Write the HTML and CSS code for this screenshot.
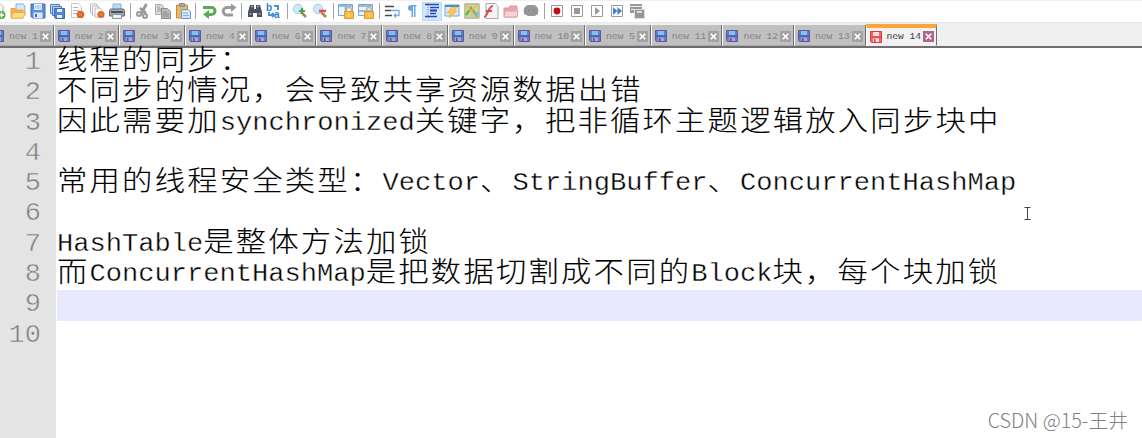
FILE: index.html
```html
<!DOCTYPE html>
<html lang="zh-CN">

<head>
  <meta charset="utf-8">
  <title>new 14</title>
  <link rel="stylesheet" href="styles.css">
</head>

<body>
  <svg class="defs">
    <symbol id="disk" viewBox="0 0 16 16">
      <path d="M1 1h14v14H2.500L1 13.500z" fill="#5b8fd6" stroke="#4166b4" />
      <path d="M4 1h8v6H4z" fill="#e4f1ff" />
      <path d="M4.500 3h7M4.500 5h7" stroke="#8dc0ee" />
      <path d="M3.500 9.500h9V15h-9z" fill="#dceaf8" />
      <path d="M5 11h2v3H5z" fill="#4166b4" />
    </symbol>
    <symbol id="tabdisk" viewBox="0 0 12 12">
      <path d="M.5.5h11v11h-10l-1-1z" fill="#5a83c9" stroke="#67549a" />
      <path d="M3 1h6v4H3z" fill="#7fc0f0" />
      <path d="M1 6h10" stroke="#504b91" />
      <path d="M3 7.500h6V11H3z" fill="#a5a8d6" />
      <path d="M4 8h1.500v3H4z" fill="#604f96" />
    </symbol>
    <symbol id="close" viewBox="0 0 10 10">
      <path d="M0 0h10v10H0z" fill="currentColor" />
      <path d="M2.500 2.500l5 5M7.500 2.500l-5 5" stroke="#fff" stroke-width="1.600" />
    </symbol>
    <symbol id="lock" viewBox="0 0 16 16">
      <path d="M8.500 9V7a2.500 2.500 0 0 1 5 0v2" fill="none" stroke="#c5b58e" stroke-width="1.400" />
      <path d="M6.500 8.500h9v7h-9z" fill="#f7bd4c" stroke="#e39b2c" />
      <path d="M10.500 10.500h1v3h-1z" fill="#fff0bd" />
    </symbol>
  </svg>

  <div class="toolbar">
    <svg class="icon" viewBox="0 0 16 16"><path d="M3 .5h7l3 3v12H3z" fill="#fff" stroke="#aaa" /><circle cx="11.500" cy="12" r="4" fill="#58ad48" /><path d="M9 12h5M11.500 9.500v5" stroke="#fff" stroke-width="1.500" /></svg>
    <svg class="icon" viewBox="0 0 16 16"><path d="M6 1h7l2 2v9H6z" fill="#d5e9fa" stroke="#8aaed6" /><path d="M1 5.500h4l1 1.500h7v8H1z" fill="#f1b64e" stroke="#e9a63f" /><path d="M3 9.500h12.500L13 15H1z" fill="#fbdc8a" stroke="#edb14b" /></svg>
    <svg class="icon"><use href="#disk" /></svg>
    <svg class="icon" viewBox="0 0 16 16"><path d="M1.500 1.500h9v9h-9z" fill="#bddcf7" stroke="#4e7ac5" /><path d="M3.500 3.500h9v9h-9z" fill="#a9d0f4" stroke="#4e7ac5" /><path d="M5.500 5.500h10v10h-9l-1-1z" fill="#5587d0" stroke="#4166b4" /><path d="M8 6h5v3H8zM8 12h5v3H8z" fill="#e2f1ff" /></svg>
    <svg class="icon" viewBox="0 0 16 16"><path d="M2.500.5h7l3 3v11h-10z" fill="#fff" stroke="#c8c8c8" /><path d="M4 4.500h5M4 7.500h6M4 10.500h4" stroke="#b5b5b5" /><circle cx="11.500" cy="11.500" r="3.800" fill="#e4632a" /><path d="M10 10l3 3M13 10l-3 3" stroke="#f28a55" /></svg>
    <svg class="icon" viewBox="0 0 16 16"><path d="M1.500 1h6v9h-6z" fill="#fff" stroke="#bbb" /><path d="M3.500 3h6v9h-6z" fill="#fff" stroke="#bbb" /><path d="M6 5h5l2 2v7H6z" fill="#fff" stroke="#bbb" /><circle cx="12" cy="11.500" r="3.600" fill="#e4632a" /><path d="M10.500 10l3 3M13.500 10l-3 3" stroke="#f28a55" /></svg>
    <svg class="icon" viewBox="0 0 16 16"><path d="M4 1h8v6H4z" fill="#b7dcfa" stroke="#8eb0d0" /><path d="M1.500 6h13l1 2v5H.5V8z" fill="#a8adb3" stroke="#62676e" /><path d="M2 9h12" stroke="#4b4e54" stroke-width="2" /><path d="M3.500 11.500h9v4h-9z" fill="#edf4fa" stroke="#8a9099" /></svg>
    <span class="sep"></span>
    <svg class="icon" viewBox="0 0 16 16"><path d="M11.500 1L6 11M5 5l6 5" stroke="#999" stroke-width="2.800" fill="none" /><circle cx="4" cy="11" r="2" fill="none" stroke="#999" stroke-width="2" /><circle cx="10" cy="13" r="2" fill="none" stroke="#999" stroke-width="2" /></svg>
    <svg class="icon" viewBox="0 0 16 16"><path d="M.5 1.500h6l2 2v8h-8z" fill="#ddd" stroke="#aaa" /><path d="M2 4h3M2 6h5M2 8h4" stroke="#999" /><path d="M6.500 5.500h6l3 3v7h-9z" fill="#bbb" stroke="#8b8b8b" /><path d="M8 9h4M8 11h6M8 13h6" stroke="#888" /></svg>
    <svg class="icon" viewBox="0 0 16 16"><path d="M1.500 2h11v13h-11z" fill="#edb85e" stroke="#c28a40" /><path d="M4.500.5h5v3h-5z" fill="#aaa" stroke="#888" /><path d="M6.500 6.500h7l2 2v7h-9z" fill="#d1e6fb" stroke="#6899d6" /><path d="M8 10h5M8 12.500h6" stroke="#88b3e7" /></svg>
    <span class="sep"></span>
    <svg class="icon" viewBox="0 0 16 16"><path d="M2 4.500h8.500a3.500 3.500 0 0 1 0 7H7" fill="none" stroke="#58ac50" stroke-width="3" /><path d="M8 7v9l-6-4.500z" fill="#58ac50" /></svg>
    <svg class="icon" viewBox="0 0 16 16"><path d="M12 4.500H6a3.500 3.500 0 0 0 0 7.500h6" fill="none" stroke="#999" stroke-width="3" /><path d="M10 .5v8.500l5.500-4.500z" fill="#999" /></svg>
    <span class="sep"></span>
    <svg class="icon" viewBox="0 0 16 16"><path d="M3 2h4v4h2V2h4l2 7v5h-5v-4H6v4H1V9z" fill="#4d535e" /><path d="M4 3.500h2M10 3.500h2M2.500 11h2M11.500 11h2" stroke="#a3adbd" stroke-width="1.500" /></svg>
    <svg class="icon" viewBox="0 0 16 16"><text x="0" y="8" class="glyph">b</text><text x="8" y="15" class="glyph">a</text><path d="M3 9v3h4M6 10l2 2-2 2M8 3h4v4" stroke="#4991d9" stroke-width="2" fill="none" /></svg>
    <span class="sep"></span>
    <svg class="icon" viewBox="0 0 16 16"><path d="M9 9l5 5" stroke="#b78051" stroke-width="2.500" /><circle cx="6" cy="6" r="4.700" fill="#cce8fc" stroke="#abcbe2" /><path d="M7 8h6M10 5v6" stroke="#51a447" stroke-width="2.200" /></svg>
    <svg class="icon" viewBox="0 0 16 16"><path d="M9 9l5 5" stroke="#b78051" stroke-width="2.500" /><circle cx="6" cy="6" r="4.700" fill="#cce8fc" stroke="#abcbe2" /><path d="M7 8h7" stroke="#e94a45" stroke-width="2.600" /></svg>
    <span class="sep"></span>
    <svg class="icon" viewBox="0 0 16 16"><path d="M.5 1.500h14v11H.5z" fill="#edf6fd" stroke="#78a8d8" /><path d="M1 3h13M7.500 3v9" stroke="#78a8d8" stroke-width="1.500" /><use href="#lock" /></svg>
    <svg class="icon" viewBox="0 0 16 16"><path d="M.5 1.500h14v11H.5z" fill="#edf6fd" stroke="#78a8d8" /><path d="M1 3h13M1 8h13" stroke="#78a8d8" stroke-width="1.500" /><use href="#lock" /></svg>
    <span class="sep"></span>
    <svg class="icon" viewBox="0 0 16 16"><path d="M1 3.500h9M1 7.500h6M1 12.500h7" stroke="#45484d" stroke-width="1.500" /><path d="M7 7.500h8v5h-5M12 10.500l-2 2 2 2" fill="none" stroke="#79ace2" stroke-width="1.300" /></svg>
    <svg class="icon" viewBox="0 0 16 16"><path d="M7.500 2h5v1.500h-1V14H10V3.500H9V14H7.500V8C2.500 8 2.500 2 7.500 2z" fill="#6aa8e6" /></svg>
    <span class="pressed"><svg class="icon" viewBox="0 0 16 16"><path d="M1 1.500h14M6 4.500h9M6 10.500h6M1 13.500h12" stroke="#2947bd" stroke-width="1.500" /><path d="M6 7.500h7" stroke="#2947bd" stroke-width="2.200" /><path d="M4 0v16" stroke="#d45c70" stroke-dasharray="1 1" /></svg></span>
    <svg class="icon" viewBox="0 0 16 16"><path d="M1 2h14v11H1z" fill="#d9eaf9" stroke="#74a5d4" /><path d="M1 3h14" stroke="#5189c8" stroke-width="2" /><path d="M8 4h5l-3 4h3l-8 7 2-5H3z" fill="#ffc84e" stroke="#e3a33a" stroke-width=".6" /></svg>
    <svg class="icon" viewBox="0 0 16 16"><path d="M.8.8h14.400v14.400H.8z" fill="#cbd69b" stroke="#a8a891" /><path d="M2 12l5-7 6 8" fill="none" stroke="#6fac6a" stroke-width="2.500" /><path d="M3 2l4 6 6-6M8 8v6" fill="none" stroke="#f0b950" stroke-width="1.500" /><path d="M10 9h4v5h-3z" fill="#79b7cb" /></svg>
    <svg class="icon" viewBox="0 0 16 16"><path d="M3 .5h9l3 3v12H3z" fill="#f5f5f5" stroke="#aaa" /><path d="M1 14c4 0 4-11 9-11M3 8h6" fill="none" stroke="#d94955" stroke-width="2" /></svg>
    <svg class="icon" viewBox="0 0 16 16"><path d="M1 5h5l1-2h7v11H1z" fill="#e8a7aa" stroke="#da9296" /><path d="M2 8h13l-1 6H1z" fill="#f7d5d6" stroke="#dda0a3" /></svg>
    <svg class="icon" viewBox="0 0 16 16"><path d="M1 5l3-3h8l3 3v6l-3 2H5l-4-2z" fill="#999" /><ellipse cx="8" cy="8" rx="7.500" ry="4.500" fill="#969696" /><path d="M5 7h1M10 7h1" stroke="#777" /></svg>
    <span class="sep"></span>
    <svg class="icon" viewBox="0 0 16 16"><path class="key" d="M2.500 2.500h11v11h-11z" /><circle cx="8" cy="8" r="3.400" fill="#c40d12" /></svg>
    <svg class="icon" viewBox="0 0 16 16"><path class="key" d="M2.500 2.500h11v11h-11z" /><path d="M5 5h6v6H5z" fill="#999" /></svg>
    <svg class="icon" viewBox="0 0 16 16"><path class="key" d="M2.500 2.500h11v11h-11z" /><path d="M6 4l5 4-5 4z" fill="#999" /></svg>
    <svg class="icon" viewBox="0 0 16 16"><path class="key" d="M2.500 2.500h11v11h-11z" /><path d="M4 4l4.500 4L4 12zM8.500 4L13 8l-4.500 4z" fill="#3c83d6" /></svg>
    <svg class="icon" viewBox="0 0 16 16"><path d="M1 1h12v9H1z" fill="#999" /><path d="M1 3.500h12M2 6.500h8" stroke="#eee" /><path d="M5.500 6.500h10v9h-10z" fill="#969696" stroke="#ddd" /><path d="M8 8h5v2H8z" fill="#ddd" /></svg>
  </div>

  <div class="tabs">
    <div class="tab"><svg class="disk"><use href="#tabdisk" /></svg><span>new 1</span><svg class="close"><use href="#close" /></svg></div>
    <div class="tab"><svg class="disk"><use href="#tabdisk" /></svg><span>new 2</span><svg class="close"><use href="#close" /></svg></div>
    <div class="tab"><svg class="disk"><use href="#tabdisk" /></svg><span>new 3</span><svg class="close"><use href="#close" /></svg></div>
    <div class="tab"><svg class="disk"><use href="#tabdisk" /></svg><span>new 4</span><svg class="close"><use href="#close" /></svg></div>
    <div class="tab"><svg class="disk"><use href="#tabdisk" /></svg><span>new 6</span><svg class="close"><use href="#close" /></svg></div>
    <div class="tab"><svg class="disk"><use href="#tabdisk" /></svg><span>new 7</span><svg class="close"><use href="#close" /></svg></div>
    <div class="tab"><svg class="disk"><use href="#tabdisk" /></svg><span>new 8</span><svg class="close"><use href="#close" /></svg></div>
    <div class="tab"><svg class="disk"><use href="#tabdisk" /></svg><span>new 9</span><svg class="close"><use href="#close" /></svg></div>
    <div class="tab wide"><svg class="disk"><use href="#tabdisk" /></svg><span>new 10</span><svg class="close"><use href="#close" /></svg></div>
    <div class="tab"><svg class="disk"><use href="#tabdisk" /></svg><span>new 5</span><svg class="close"><use href="#close" /></svg></div>
    <div class="tab wide"><svg class="disk"><use href="#tabdisk" /></svg><span>new 11</span><svg class="close"><use href="#close" /></svg></div>
    <div class="tab wide"><svg class="disk"><use href="#tabdisk" /></svg><span>new 12</span><svg class="close"><use href="#close" /></svg></div>
    <div class="tab wide"><svg class="disk"><use href="#tabdisk" /></svg><span>new 13</span><svg class="close"><use href="#close" /></svg></div>
    <div class="tab wide active">
      <svg class="disk" viewBox="0 0 12 12"><path d="M.5.5h11v11h-10l-1-1z" fill="#f0686a" stroke="#d93c3e" /><path d="M3 1h6v4H3z" fill="#ffdada" /><path d="M1 6h10" stroke="#d93c3e" /><path d="M3 7.500h6V11H3z" fill="#ffe5e5" /><path d="M4 8h1.500v3H4z" fill="#d93c3e" /></svg>
      <span>new 14</span><svg class="close"><use href="#close" /></svg>
    </div>
  </div>

  <div class="editor">
    <div class="gutter">
      <div>1</div>
      <div>2</div>
      <div>3</div>
      <div>4</div>
      <div>5</div>
      <div>6</div>
      <div>7</div>
      <div>8</div>
      <div>9</div>
      <div>10</div>
    </div>
    <div class="code">
      <div class="line"><p><b>线程的同步：</b></p></div>
      <div class="line"><p><b>不同步的情况，会导致共享资源数据出错</b></p></div>
      <div class="line"><p><b>因此需要加</b>synchronized<b>关键字，把非循环主题逻辑放入同步块中</b></p></div>
      <div class="line"></div>
      <div class="line"><p><b>常用的线程安全类型：</b>Vector<b>、</b>StringBuffer<b>、</b>ConcurrentHashMap</p></div>
      <div class="line"></div>
      <div class="line"><p>HashTable<b>是整体方法加锁</b></p></div>
      <div class="line"><p><b>而</b>ConcurrentHashMap<b>是把数据切割成不同的</b>Block<b>块，每个块加锁</b></p></div>
      <div class="line current"></div>
      <div class="line"></div>
    </div>
    <svg class="cursor" viewBox="0 0 7 13"><path d="M.5.5h6M.5 12.500h6M3.500.5v12" /></svg>
    <div class="watermark">CSDN @15-王井</div>
  </div>
</body>

</html>
```
FILE: styles.css
```css
body {
  margin: 0;
  width: 1142px;
  height: 438px;
  overflow: hidden;
  display: flex;
  flex-direction: column;
  background: #fff;
  font-family: "Liberation Mono", "Noto Sans CJK SC", monospace;
}

.defs {
  display: none;
}

/* toolbar */
.toolbar {
  box-sizing: border-box;
  flex: none;
  height: 23px;
  padding-bottom: 1px;
  border-top: 1px solid #f0f0f0;
  border-bottom: 1px solid #e9e9e9;
  display: flex;
  align-items: center;
  margin-left: -12px;
  background: #fff;
}

.icon {
  flex: none;
  width: 16px;
  height: 16px;
  margin: 0 1.925px;
}

.sep {
  flex: none;
  width: 1px;
  height: 16px;
  margin: 0 2.6px;
  background: #a5a5a5;
}

.pressed {
  flex: none;
  height: 19px;
  display: flex;
  align-items: center;
  background: #cce8ff;
  box-shadow: 0 0 0 1px #b5dbfb inset;
}

.glyph {
  font: bold 10px "Liberation Sans", sans-serif;
  fill: #347fcf;
}

.key {
  fill: #fff;
  stroke: #999;
}

/* tabs */
.tabs {
  box-sizing: border-box;
  flex: none;
  height: 25px;
  padding-top: 2px;
  border-bottom: 2px solid #706c70;
  display: flex;
  margin-left: -12px;
  background: #f0f0f0;
}

.tab {
  box-sizing: border-box;
  flex: none;
  width: 65.7px;
  padding: 2px 2px 0 3px;
  border-left: 1px solid #fff;
  border-right: 1px solid #6f6f6f;
  border-bottom: 1px solid #aaa;
  display: flex;
  align-items: center;
  background: #c0c0c0;
  color: #6c6c6c;
  font-size: 9.6px;
  line-height: 12px;
  white-space: pre;
  -webkit-text-stroke: .2px #c0c0c0;
}

.wide {
  width: 71.6px;
}

.tab span {
  flex: 1;
  padding: 1px 0 0 5px;
}

.disk {
  flex: none;
  width: 12px;
  height: 12px;
}

.close {
  flex: none;
  width: 11px;
  height: 11px;
  color: #a2a2a2;
}

.active {
  margin-top: -1px;
  padding-top: 0;
  border-top: 4px solid #faa63c;
  border-bottom-color: #f0f0f0;
  background: #f2f2f2;
  color: #000;
  -webkit-text-stroke: .15px #f2f2f2;
}

.active .close {
  color: #b0668c;
}

/* editor */
.editor {
  flex: 1;
  position: relative;
  display: flex;
  line-height: 30.3px;
}

.gutter {
  box-sizing: border-box;
  flex: none;
  width: 56px;
  margin-right: 1px;
  padding-right: 15px;
  background: #e4e4e4;
  color: #7c7c7c;
  font-size: 25px;
  text-align: right;
  -webkit-text-stroke: .5px #e4e4e4;
}

.gutter div {
  height: 30.3px;
  transform: scaleX(1.08);
  transform-origin: right;
}

.code {
  flex: 1;
}

.line {
  height: 30.3px;
}

.line p {
  margin: 0;
  width: max-content;
  color: #000;
  font-size: 25px;
  white-space: pre;
  transform: scaleX(1.083);
  transform-origin: left;
  -webkit-text-stroke: .35px #fff;
}

/* wide characters take two columns */
.line b {
  font-family: "Noto Sans CJK SC", sans-serif;
  font-size: 28px;
  font-weight: 300;
  letter-spacing: 2.05px;
  line-height: 1px;
  vertical-align: -1px;
  -webkit-text-stroke: .1px #000;
}

.current {
  background: #e8e8ff;
}

.cursor {
  position: absolute;
  left: 1024px;
  top: 159px;
  width: 7px;
  height: 13px;
  fill: none;
  stroke: #444;
}

.watermark {
  position: absolute;
  right: 14px;
  bottom: 3px;
  color: #808080;
  font: 300 19.8px/30px "Noto Sans CJK SC", sans-serif;
}
```
